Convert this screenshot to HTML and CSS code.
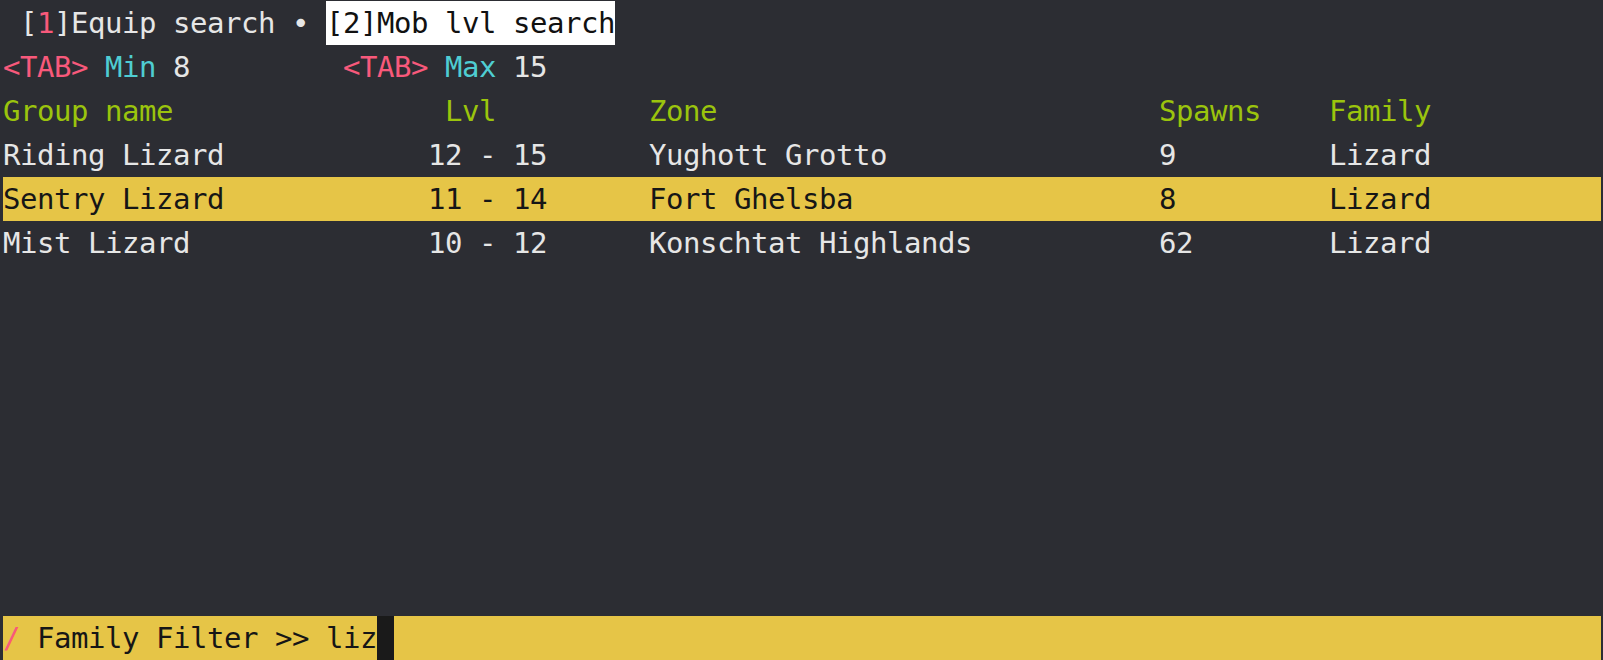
FILE: index.html
```html
<!DOCTYPE html>
<html lang="en">
<head>
<meta charset="utf-8">
<title>Mob lvl search</title>
<link rel="stylesheet" href="styles.css">
</head>
<body>
<div class="term">
  <div class="line tabs">
    <span> [</span><span class="pink">1</span><span>]Equip search • </span><span class="active">[2]Mob lvl search</span>
  </div>
  <div class="line filters">
    <div class="filter"><span class="pink">&lt;TAB&gt;</span> <span class="cyan">Min</span> 8</div>
    <div class="filter"><span class="pink">&lt;TAB&gt;</span> <span class="cyan">Max</span> 15</div>
  </div>
  <div class="line row head">
    <span>Group name</span><span class="lvl-head">Lvl</span><span>Zone</span><span>Spawns</span><span>Family</span>
  </div>
  <div class="line row">
    <span>Riding Lizard</span><span>12 - 15</span><span>Yughott Grotto</span><span>9</span><span>Lizard</span>
  </div>
  <div class="line row selected">
    <span>Sentry Lizard</span><span>11 - 14</span><span>Fort Ghelsba</span><span>8</span><span>Lizard</span>
  </div>
  <div class="line row">
    <span>Mist Lizard</span><span>10 - 12</span><span>Konschtat Highlands</span><span>62</span><span>Lizard</span>
  </div>
  <div class="spacer"></div>
  <div class="line prompt">
    <span class="pink">/</span><span> Family Filter &gt;&gt; liz</span><span class="cursor"> </span>
  </div>
</div>
</body>
</html>
```

FILE: styles.css
```css
:root {
  --cw: 17px;
  --lh: 44px;
  --bg: #2c2d33;
  --fg: #e6e6e6;
  --pink: #f8597b;
  --cyan: #4fcdd2;
  --green: #9bc40d;
  --yellow: #e6c547;
}

html, body {
  margin: 0;
  padding: 0;
  background: var(--bg);
  height: 100%;
  overflow: hidden;
}

.term {
  padding: 1px 2px 0 3px;
  height: 659px;
  display: flex;
  flex-direction: column;
  font-family: "DejaVu Sans Mono", "Liberation Mono", monospace;
  font-size: 29px;
  letter-spacing: -0.46px;
  color: var(--fg);
}

.line {
  height: var(--lh);
  line-height: var(--lh);
  white-space: pre;
  flex: none;
  box-sizing: border-box;
}

.pink { color: var(--pink); }
.cyan { color: var(--cyan); }

.tabs { display: flex; }
.tabs .active {
  background: #ffffff;
  color: #111111;
}

.filters { display: flex; }
.filter { width: calc(var(--cw) * 20); }

.row {
  display: grid;
  grid-template-columns:
    calc(var(--cw) * 25)
    calc(var(--cw) * 13)
    calc(var(--cw) * 30)
    calc(var(--cw) * 10)
    1fr;
}

.head { color: var(--green); }
.lvl-head { padding-left: var(--cw); }

.selected {
  background: var(--yellow);
  color: #161616;
}

.spacer { flex: 1; }

.prompt {
  display: flex;
  background: var(--yellow);
  color: #161616;
}

.cursor {
  width: var(--cw);
  background: #1a1a1a;
}
```
